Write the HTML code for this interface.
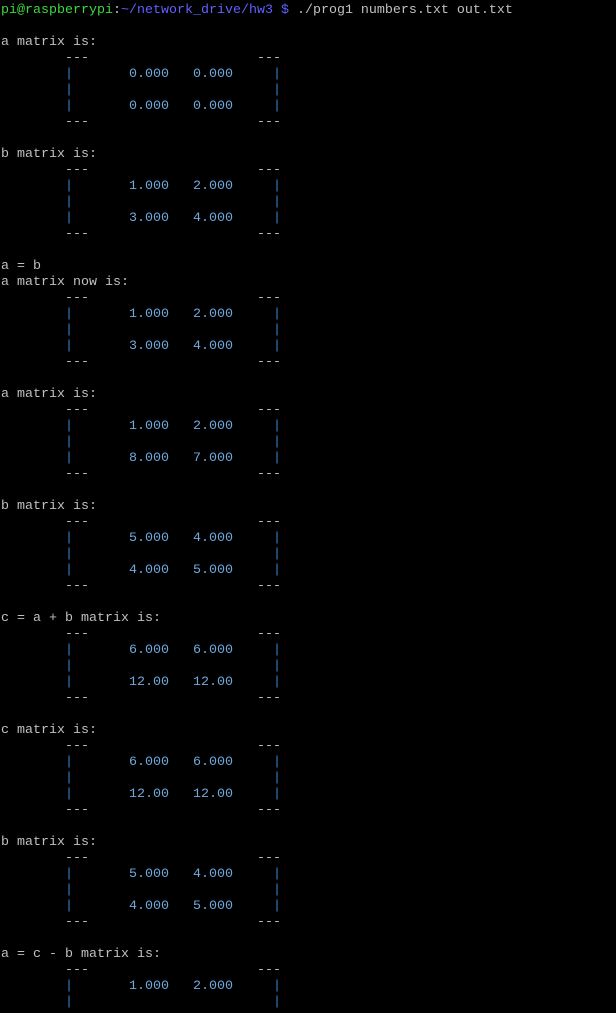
<!DOCTYPE html><html><head><style>
html,body{margin:0;padding:0;background:#000;width:616px;height:1013px;overflow:hidden}
pre{margin:0;padding:3px 0 0 1px;font-family:"Liberation Mono",monospace;font-size:13.33px;line-height:16px;color:#c0c0c0;letter-spacing:0}
.g{color:#3ed83e}.p{color:#6060ff}.b{color:#3a80c8}.n{color:#72a8dc}.d{color:#bbbbbb}
</style></head><body><pre><span class="g">pi@raspberrypi</span>:<span class="p">~/network_drive/hw3 $</span> ./prog1 numbers.txt out.txt

a matrix is:
        ---                     ---
        <span class="b">|</span>       <span class="n">0.000   0.000</span>     <span class="b">|</span>
        <span class="b">|</span>                         <span class="b">|</span>
        <span class="b">|</span>       <span class="n">0.000   0.000</span>     <span class="b">|</span>
        ---                     ---

b matrix is:
        ---                     ---
        <span class="b">|</span>       <span class="n">1.000   2.000</span>     <span class="b">|</span>
        <span class="b">|</span>                         <span class="b">|</span>
        <span class="b">|</span>       <span class="n">3.000   4.000</span>     <span class="b">|</span>
        ---                     ---

a = b
a matrix now is:
        ---                     ---
        <span class="b">|</span>       <span class="n">1.000   2.000</span>     <span class="b">|</span>
        <span class="b">|</span>                         <span class="b">|</span>
        <span class="b">|</span>       <span class="n">3.000   4.000</span>     <span class="b">|</span>
        ---                     ---

a matrix is:
        ---                     ---
        <span class="b">|</span>       <span class="n">1.000   2.000</span>     <span class="b">|</span>
        <span class="b">|</span>                         <span class="b">|</span>
        <span class="b">|</span>       <span class="n">8.000   7.000</span>     <span class="b">|</span>
        ---                     ---

b matrix is:
        ---                     ---
        <span class="b">|</span>       <span class="n">5.000   4.000</span>     <span class="b">|</span>
        <span class="b">|</span>                         <span class="b">|</span>
        <span class="b">|</span>       <span class="n">4.000   5.000</span>     <span class="b">|</span>
        ---                     ---

c = a + b matrix is:
        ---                     ---
        <span class="b">|</span>       <span class="n">6.000   6.000</span>     <span class="b">|</span>
        <span class="b">|</span>                         <span class="b">|</span>
        <span class="b">|</span>       <span class="n">12.00   12.00</span>     <span class="b">|</span>
        ---                     ---

c matrix is:
        ---                     ---
        <span class="b">|</span>       <span class="n">6.000   6.000</span>     <span class="b">|</span>
        <span class="b">|</span>                         <span class="b">|</span>
        <span class="b">|</span>       <span class="n">12.00   12.00</span>     <span class="b">|</span>
        ---                     ---

b matrix is:
        ---                     ---
        <span class="b">|</span>       <span class="n">5.000   4.000</span>     <span class="b">|</span>
        <span class="b">|</span>                         <span class="b">|</span>
        <span class="b">|</span>       <span class="n">4.000   5.000</span>     <span class="b">|</span>
        ---                     ---

a = c - b matrix is:
        ---                     ---
        <span class="b">|</span>       <span class="n">1.000   2.000</span>     <span class="b">|</span>
        <span class="b">|</span>                         <span class="b">|</span>
</pre></body></html>
